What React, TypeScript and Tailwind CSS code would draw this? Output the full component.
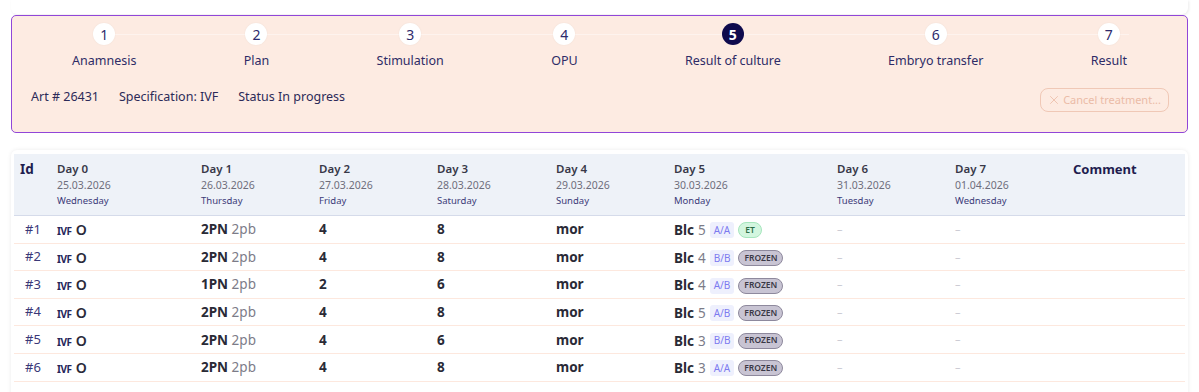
import { X } from "lucide-react";

const steps = [
  "Anamnesis",
  "Plan",
  "Stimulation",
  "OPU",
  "Result of culture",
  "Embryo transfer",
  "Result",
];

const days = [
  { label: "Day 0", date: "25.03.2026", weekday: "Wednesday", w: "w-[144px]" },
  { label: "Day 1", date: "26.03.2026", weekday: "Thursday", w: "w-[118px]" },
  { label: "Day 2", date: "27.03.2026", weekday: "Friday", w: "w-[118px]" },
  { label: "Day 3", date: "28.03.2026", weekday: "Saturday", w: "w-[119px]" },
  { label: "Day 4", date: "29.03.2026", weekday: "Sunday", w: "w-[118px]" },
  { label: "Day 5", date: "30.03.2026", weekday: "Monday", w: "w-[163px]" },
  { label: "Day 6", date: "31.03.2026", weekday: "Tuesday", w: "w-[118px]" },
  { label: "Day 7", date: "01.04.2026", weekday: "Wednesday", w: "w-[118px]" },
];

const embryos = [
  { id: 1, pn: "2PN", d2: "4", d3: "8", blc: 5, grade: "A/A", tag: "ET" },
  { id: 2, pn: "2PN", d2: "4", d3: "8", blc: 4, grade: "B/B", tag: "FROZEN" },
  { id: 3, pn: "1PN", d2: "2", d3: "6", blc: 4, grade: "A/B", tag: "FROZEN" },
  { id: 4, pn: "2PN", d2: "4", d3: "8", blc: 5, grade: "A/B", tag: "FROZEN" },
  { id: 5, pn: "2PN", d2: "4", d3: "6", blc: 3, grade: "B/B", tag: "FROZEN" },
  { id: 6, pn: "2PN", d2: "4", d3: "8", blc: 3, grade: "A/A", tag: "FROZEN" },
];

const Stepper = () => {
  const active = 5;
  return (
    <div className="relative px-[60px] pt-[7px]">
      {/* connector line */}
      <div className="absolute left-[92px] right-[58px] top-[18px] h-px bg-[#fef3ee]" />
      <div className="relative flex justify-between">
        {steps.map((s, i) => {
          const n = i + 1;
          const isActive = n === active;
          return (
            <div key={s} className="flex flex-col items-center">
              <div
                className={
                  isActive
                    ? "w-[22px] h-[22px] rounded-full bg-[#0e0a4d] text-white font-bold text-[14px] flex items-center justify-center"
                    : "w-[22px] h-[22px] rounded-full bg-white text-[#2e2a6c] text-[14px] flex items-center justify-center shadow-[0_0_2px_rgba(0,0,0,0.06)]"
                }
              >
                {n}
              </div>
              <div className="mt-[7px] text-[12.5px] leading-[18px] text-[#2e2b66] whitespace-nowrap">
                {s}
              </div>
            </div>
          );
        })}
      </div>
    </div>
  );
};

const Badge = ({ tag }: { tag: string }) =>
  tag === "ET" ? (
    <span className="ml-[4px] inline-flex items-center h-[16px] px-[6px] rounded-full bg-[#d3f6df] border border-[#a6e6bd] text-[#2d6e48] text-[8.5px] font-semibold">
      ET
    </span>
  ) : (
    <span className="ml-[4px] inline-flex items-center h-[16px] px-[5px] rounded-full bg-[#c8c4d3] border border-[#8e899d] text-[#3a3846] text-[8.5px] font-semibold">
      FROZEN
    </span>
  );

export default function App() {
  return (
    <div
      className="w-[1199px] h-[392px] bg-white px-[11px] overflow-hidden"
      style={{ fontFamily: '"Noto Sans", "Open Sans", sans-serif' }}
    >
      {/* Card above, cut off */}
      <div className="h-[14px] bg-white rounded-b-md shadow-[1px_1px_3px_rgba(0,0,0,0.08)]" />

      {/* Treatment panel */}
      <div className="mt-px h-[118px] rounded-[5px] border border-[#9146d8] bg-[#fdebe2]">
        <Stepper />
        <div className="mt-[18px] flex items-start justify-between pl-[19px] pr-[18px]">
          <div className="flex gap-[20px] text-[12.5px] leading-[18px] text-[#2c2a58]">
            <span>Art # 26431</span>
            <span>Specification: IVF</span>
            <span>Status In progress</span>
          </div>
          <button
            disabled
            className="flex items-center gap-[2px] h-[24px] pl-[6px] pr-[7px] rounded-[8px] border border-[#f0c8b6] text-[#ebbba7] text-[11px]"
          >
            <X size={14} strokeWidth={1.4} />
            Cancel treatment...
          </button>
        </div>
      </div>

      {/* Culture table */}
      <div className="mt-[17px] h-[260px] rounded-[6px] bg-white px-[3px] pt-[4px] shadow-[0_0_4px_rgba(0,0,0,0.08)]">
        <table className="w-full table-fixed border-collapse">
          <thead>
            <tr className="bg-[#eef2f8] border-b border-[#d5dbea] align-top">
              <th className="w-[43px] pl-[6px] pt-[6px] text-left text-[13.5px] font-bold leading-[18px] text-[#1f1d4f]">
                Id
              </th>
              {days.map((d) => (
                <th key={d.label} className={`${d.w} pt-[7px] pb-[6px] text-left font-normal`}>
                  <div className="text-[11.5px] font-semibold leading-[16px] text-[#383848]">
                    {d.label}
                  </div>
                  <div className="text-[10.5px] leading-[16px] text-[#6e6e7c]">
                    {d.date}
                  </div>
                  <div className="text-[9.5px] leading-[16px] text-[#3b3a79]">
                    {d.weekday}
                  </div>
                </th>
              ))}
              <th className="pt-[6px] text-left text-[13px] font-bold leading-[18px] text-[#1f1d4f]">
                Comment
              </th>
            </tr>
          </thead>
          <tbody>
            {embryos.map((e) => (
              <tr key={e.id} className="h-[27.6px] border-b border-[#fde8de]">
                <td className="pl-[11px] text-[13px] text-[#3a3878]">#{e.id}</td>
                <td className="whitespace-nowrap">
                  <span className="text-[10px] font-bold text-[#26245a] tracking-[-0.4px]">IVF</span>{" "}
                  <span className="text-[14px] font-semibold text-[#2a2a3a]">O</span>
                </td>
                <td className="whitespace-nowrap text-[13.5px]">
                  <span className="font-bold text-[#2a2a36]">{e.pn}</span>{" "}
                  <span className="text-[#7c7c88]">2pb</span>
                </td>
                <td className="text-[13.5px] font-bold text-[#2a2a36]">{e.d2}</td>
                <td className="text-[13.5px] font-bold text-[#2a2a36]">{e.d3}</td>
                <td className="text-[13.5px] font-bold text-[#2a2a36]">mor</td>
                <td className="whitespace-nowrap">
                  <span className="inline-flex items-center">
                    <span className="text-[13.5px] font-bold text-[#2a2a36]">Blc</span>
                    <span className="ml-[4px] text-[13.5px] text-[#7c7c88]">{e.blc}</span>
                    <span className="ml-[4px] px-[4px] h-[16px] inline-flex items-center rounded-[3px] bg-[#eef0fd] text-[#7c7af0] text-[10px]">
                      {e.grade}
                    </span>
                    <Badge tag={e.tag} />
                  </span>
                </td>
                <td className="text-[11px] text-[#c9c9d2]">–</td>
                <td className="text-[11px] text-[#c9c9d2]">–</td>
                <td />
              </tr>
            ))}
          </tbody>
        </table>
      </div>
    </div>
  );
}
